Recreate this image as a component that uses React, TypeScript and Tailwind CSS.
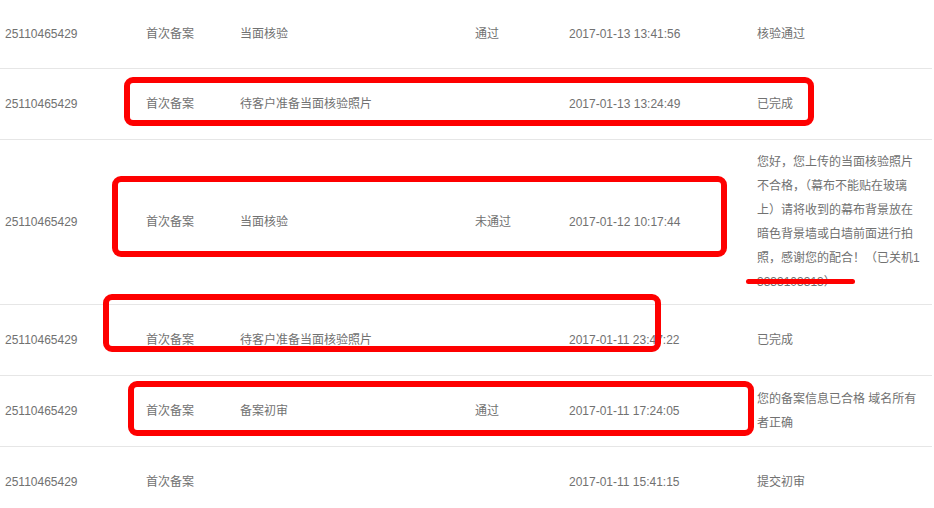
import React from 'react';

type Row = {
  id: string;
  kind: string;
  step: string;
  result: string;
  time: string;
  remark: React.ReactNode;
  height: string;
};

const ROWS: Row[] = [
  { id: '25110465429', kind: '首次备案', step: '当面核验', result: '通过', time: '2017-01-13 13:41:56', remark: '核验通过', height: 'h-[69px]' },
  { id: '25110465429', kind: '首次备案', step: '待客户准备当面核验照片', result: '', time: '2017-01-13 13:24:49', remark: '已完成', height: 'h-[71px]' },
  {
    id: '25110465429',
    kind: '首次备案',
    step: '当面核验',
    result: '未通过',
    time: '2017-01-12 10:17:44',
    remark: '您好，您上传的当面核验照片不合格，（幕布不能贴在玻璃上）请将收到的幕布背景放在暗色背景墙或白墙前面进行拍照，感谢您的配合！（已关机13333103313）',
    height: 'h-[165px]',
  },
  { id: '25110465429', kind: '首次备案', step: '待客户准备当面核验照片', result: '', time: '2017-01-11 23:47:22', remark: '已完成', height: 'h-[71px]' },
  { id: '25110465429', kind: '首次备案', step: '备案初审', result: '通过', time: '2017-01-11 17:24:05', remark: '您的备案信息已合格 域名所有者正确', height: 'h-[71px]' },
  { id: '25110465429', kind: '首次备案', step: '', result: '', time: '2017-01-11 15:41:15', remark: '提交初审', height: 'h-[71px]' },
];

// red marker boxes drawn over the screenshot
const MARKS = [
  'left-[124px] top-[77px] w-[690px] h-[49px]',
  'left-[112px] top-[176px] w-[615px] h-[81px]',
  'left-[103px] top-[294px] w-[558px] h-[58px]',
  'left-[128px] top-[381px] w-[626px] h-[55px]',
];

export default function App() {
  return (
    <div
      className="relative w-[934px] h-[508px] overflow-hidden bg-white text-[12px] text-[#717171]"
      style={{ fontFamily: '"Liberation Sans", "Noto Sans CJK SC", sans-serif' }}
    >
      <div className="w-[932px]">
        {ROWS.map((r, i) => (
          <div
            key={i}
            className={`grid grid-cols-[141px_94px_235px_94px_188px_1fr] items-center pl-[5px] leading-[24px] border-b border-[#e6e6e6] ${r.height}`}
          >
            <span>{r.id}</span>
            <span>{r.kind}</span>
            <span>{r.step}</span>
            <span>{r.result}</span>
            <span>{r.time}</span>
            <span className="w-[166px] break-all">{r.remark}</span>
          </div>
        ))}
      </div>

      {MARKS.map((m, i) => (
        <div key={i} className={`absolute ${m} border-[6px] border-[#fe0000] rounded-[9px]`} />
      ))}
      <div className="absolute left-[746px] top-[279px] w-[109px] h-[5px] rounded-full bg-[#fe0000]" />
    </div>
  );
}
